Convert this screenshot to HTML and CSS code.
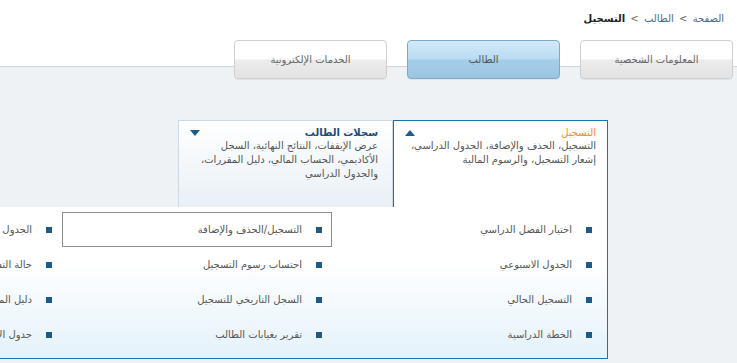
FILE: index.html
```html
<!DOCTYPE html>
<html lang="ar" dir="rtl">
<head>
    <meta charset="UTF-8">
    <title>التسجيل</title>
    <link rel="stylesheet" href="styles.css">
</head>
<body>
    <div class="top">
        <div class="crumbs">
            <a href="#">الصفحة</a> <span class="sep">&gt;</span> <a href="#">الطالب</a> <span class="sep">&gt;</span> <b>التسجيل</b>
        </div>
        <div class="tabs">
            <div class="tab">المعلومات الشخصية</div>
            <div class="tab active">الطالب</div>
            <div class="tab">الخدمات الإلكترونية</div>
        </div>
    </div>

    <div class="main">
        <div class="cats">
            <div class="cat open">
                <div class="cat-head">
                    <span class="cat-title">التسجيل</span>
                    <span class="arrow up"></span>
                </div>
                <p>التسجيل، الحذف والإضافة، الجدول الدراسي، إشعار التسجيل، والرسوم المالية</p>
            </div>
            <div class="cat">
                <div class="cat-head">
                    <span class="cat-title">سجلات الطالب</span>
                    <span class="arrow down"></span>
                </div>
                <p>عرض الإيقفات، النتائج النهائية، السجل الأكاديمي، الحساب المالي، دليل المقررات، والجدول الدراسي</p>
            </div>
        </div>

        <div class="panel">
            <a class="item" href="#"><i></i>اختيار الفصل الدراسي</a>
            <a class="item" href="#"><i></i>الجدول الاسبوعي</a>
            <a class="item" href="#"><i></i>التسجيل الحالي</a>
            <a class="item" href="#"><i></i>الخطة الدراسية</a>
            <a class="item current" href="#"><i></i>التسجيل/الحذف والإضافة</a>
            <a class="item" href="#"><i></i>احتساب رسوم التسجيل</a>
            <a class="item" href="#"><i></i>السجل التاريخي للتسجيل</a>
            <a class="item" href="#"><i></i>تقرير بغيابات الطالب</a>
            <a class="item" href="#"><i></i>الجدول الدراسي</a>
            <a class="item" href="#"><i></i>حالة التسجيل</a>
            <a class="item" href="#"><i></i>دليل المقررات</a>
            <a class="item" href="#"><i></i>جدول الاختبارات</a>
        </div>
    </div>
</body>
</html>
```

FILE: styles.css
```css
html, body{
    margin: 0;
    padding: 0;
}

body{
    font-family: "DejaVu Sans", sans-serif;
    font-size: 10px;
    color: #555;
    background-color: #eef2f5;
    height: 363px;
    overflow: hidden;
}

a{
    text-decoration: none;
}

.top{
    background-color: #fff;
    height: 66px;
    border-bottom: 1px solid #cdd6de;
}

.crumbs{
    padding: 13px 13px 0 0;
    height: 28px;
    box-sizing: border-box;
    color: #777;
}

.crumbs a{
    color: #4a6b8c;
}

.crumbs b{
    color: #222;
}

.crumbs .sep{
    color: #666;
    margin: 0 2px;
}

.tabs{
    display: flex;
    gap: 20px;
    padding-right: 4px;
    margin-top: 12px;
    position: relative;
    z-index: 1;
}

.tab{
    width: 153px;
    height: 39px;
    box-sizing: border-box;
    border: 1px solid #cfcfcf;
    border-radius: 4px;
    background: linear-gradient(#fff 0%, #fff 48%, #ececec 52%, #e2e2e2 100%);
    display: flex;
    justify-content: center;
    align-items: center;
    color: #666;
    box-shadow: 0 1px 1px rgba(0,0,0,0.06);
}

.tab.active{
    border-color: #7ea9c9;
    background: linear-gradient(#d3eaf8 0%, #b9dcf2 48%, #a4cde9 52%, #9cc5e3 100%);
    color: #555;
}

.main{
    padding-top: 53px;
}

.cats{
    display: flex;
    margin-right: 129px;
}

.cat{
    width: 215px;
    height: 87px;
    box-sizing: border-box;
    padding: 5px 14px 0 11px;
    border: 1px solid #cdd9e3;
    border-bottom: none;
    background: linear-gradient(#fff, #e8f0f6);
}

.cat.open{
    border-color: #1b72b0;
    background: #fff;
    padding-right: 11px;
}

.cat-head{
    display: flex;
    justify-content: space-between;
    align-items: center;
    height: 13px;
}

.cat-title{
    font-weight: bold;
    color: #1d4c78;
}

.cat.open .cat-title{
    font-weight: normal;
    color: #f08a24;
}

.arrow{
    width: 0;
    height: 0;
    border-left: 5px solid transparent;
    border-right: 5px solid transparent;
}

.arrow.up{
    border-bottom: 6px solid #1d5a8c;
}

.arrow.down{
    border-top: 6px solid #1d5a8c;
}

.cat p{
    margin: 0;
    line-height: 14px;
    color: #555;
}

.panel{
    width: 840px;
    margin-right: 129px;
    box-sizing: border-box;
    padding: 5px 5px 6px 0;
    border-right: 1px solid #1b72b0;
    border-bottom: 1px solid #1b72b0;
    background: linear-gradient(#fff 0%, #fff 35%, #e4f2fa 100%);
    display: grid;
    grid-auto-flow: column;
    grid-template-rows: repeat(4, 35px);
    grid-auto-columns: 270px;
}

.item{
    display: flex;
    align-items: center;
    gap: 14px;
    padding-right: 9px;
    border: 1px solid transparent;
    color: #555;
    white-space: nowrap;
}

.item i{
    width: 6px;
    height: 6px;
    background-color: #1d5a8c;
}

.item.current{
    border-color: #8c8c8c;
    background-color: #fff;
}
```
